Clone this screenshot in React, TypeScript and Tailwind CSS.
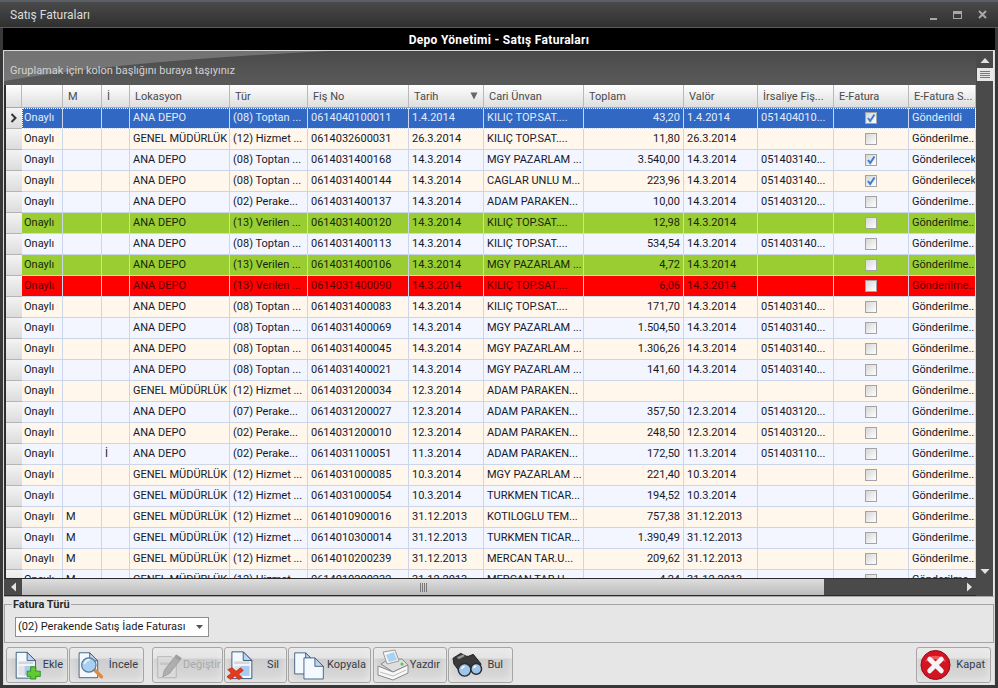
import type { ReactNode } from "react"

type Tone = "selected" | "cream" | "blue" | "green" | "red"

interface Invoice {
  m?: string
  i?: string
  loc: string
  type: string
  no: string
  date: string
  cari: string
  total: string
  valor: string
  irs: string
  efatura?: boolean
  status: string
  tone: Tone
}

const COLS = "grid grid-cols-[16px_41px_39px_28px_100px_78px_101px_75px_100px_100px_74px_76px_75px_67px]"

const TONE_CLASSES: Record<Tone, string> = {
  selected: "bg-[#3068c4] text-[#e6ecf8] outline-1 outline-dotted outline-white -outline-offset-1",
  cream: "bg-[#fff6ec] text-[#15192a]",
  blue: "bg-[#f3f5ff] text-[#15192a]",
  green: "bg-[#9acd32] text-[#15280a]",
  red: "bg-[#ff0000] text-[#5a0000]",
}

const ANA = "ANA DEPO"
const GEN = "GENEL MÜDÜRLÜK"
const TOP = "(08) Toptan ..."
const HIZ = "(12) Hizmet ..."
const PER = "(02) Perake..."
const VER = "(13) Verilen ..."
const KIL = "KILIÇ TOP.SAT...."
const MGY = "MGY PAZARLAM ..."
const ADM = "ADAM PARAKEN..."
const TRK = "TURKMEN TICAR..."
const MER = "MERCAN TAR.U..."
const GME = "Gönderilme..."

const rows: Invoice[] = [
  { loc: ANA, type: TOP, no: "0614040100011", date: "1.4.2014", cari: KIL, total: "43,20", valor: "1.4.2014", irs: "051404010...", efatura: true, status: "Gönderildi", tone: "selected" },
  { loc: GEN, type: HIZ, no: "0614032600031", date: "26.3.2014", cari: KIL, total: "11,80", valor: "26.3.2014", irs: "", status: GME, tone: "cream" },
  { loc: ANA, type: TOP, no: "0614031400168", date: "14.3.2014", cari: MGY, total: "3.540,00", valor: "14.3.2014", irs: "051403140...", efatura: true, status: "Gönderilecek", tone: "blue" },
  { loc: ANA, type: TOP, no: "0614031400144", date: "14.3.2014", cari: "CAGLAR UNLU M...", total: "223,96", valor: "14.3.2014", irs: "051403140...", efatura: true, status: "Gönderilecek", tone: "cream" },
  { loc: ANA, type: PER, no: "0614031400137", date: "14.3.2014", cari: ADM, total: "10,00", valor: "14.3.2014", irs: "051403120...", status: GME, tone: "blue" },
  { loc: ANA, type: VER, no: "0614031400120", date: "14.3.2014", cari: KIL, total: "12,98", valor: "14.3.2014", irs: "", status: GME, tone: "green" },
  { loc: ANA, type: TOP, no: "0614031400113", date: "14.3.2014", cari: KIL, total: "534,54", valor: "14.3.2014", irs: "051403140...", status: GME, tone: "blue" },
  { loc: ANA, type: VER, no: "0614031400106", date: "14.3.2014", cari: MGY, total: "4,72", valor: "14.3.2014", irs: "", status: GME, tone: "green" },
  { loc: ANA, type: VER, no: "0614031400090", date: "14.3.2014", cari: KIL, total: "6,06", valor: "14.3.2014", irs: "", status: GME, tone: "red" },
  { loc: ANA, type: TOP, no: "0614031400083", date: "14.3.2014", cari: KIL, total: "171,70", valor: "14.3.2014", irs: "051403140...", status: GME, tone: "cream" },
  { loc: ANA, type: TOP, no: "0614031400069", date: "14.3.2014", cari: MGY, total: "1.504,50", valor: "14.3.2014", irs: "051403140...", status: GME, tone: "blue" },
  { loc: ANA, type: TOP, no: "0614031400045", date: "14.3.2014", cari: MGY, total: "1.306,26", valor: "14.3.2014", irs: "051403140...", status: GME, tone: "cream" },
  { loc: ANA, type: TOP, no: "0614031400021", date: "14.3.2014", cari: MGY, total: "141,60", valor: "14.3.2014", irs: "051403140...", status: GME, tone: "blue" },
  { loc: GEN, type: HIZ, no: "0614031200034", date: "12.3.2014", cari: ADM, total: "", valor: "", irs: "", status: GME, tone: "cream" },
  { loc: ANA, type: "(07) Perake...", no: "0614031200027", date: "12.3.2014", cari: ADM, total: "357,50", valor: "12.3.2014", irs: "051403120...", status: GME, tone: "blue" },
  { loc: ANA, type: PER, no: "0614031200010", date: "12.3.2014", cari: ADM, total: "248,50", valor: "12.3.2014", irs: "051403120...", status: GME, tone: "cream" },
  { i: "İ", loc: ANA, type: PER, no: "0614031100051", date: "11.3.2014", cari: ADM, total: "172,50", valor: "11.3.2014", irs: "051403110...", status: GME, tone: "blue" },
  { loc: GEN, type: HIZ, no: "0614031000085", date: "10.3.2014", cari: MGY, total: "221,40", valor: "10.3.2014", irs: "", status: GME, tone: "cream" },
  { loc: GEN, type: HIZ, no: "0614031000054", date: "10.3.2014", cari: TRK, total: "194,52", valor: "10.3.2014", irs: "", status: GME, tone: "blue" },
  { m: "M", loc: GEN, type: HIZ, no: "0614010900016", date: "31.12.2013", cari: "KOTILOGLU TEM...", total: "757,38", valor: "31.12.2013", irs: "", status: GME, tone: "cream" },
  { m: "M", loc: GEN, type: HIZ, no: "0614010300014", date: "31.12.2013", cari: TRK, total: "1.390,49", valor: "31.12.2013", irs: "", status: GME, tone: "blue" },
  { m: "M", loc: GEN, type: HIZ, no: "0614010200239", date: "31.12.2013", cari: MER, total: "209,62", valor: "31.12.2013", irs: "", status: GME, tone: "cream" },
  { m: "M", loc: GEN, type: HIZ, no: "0614010200232", date: "31.12.2013", cari: MER, total: "4,24", valor: "31.12.2013", irs: "", status: GME, tone: "blue" },
]

const HEADERS = ["", "", "M", "İ", "Lokasyon", "Tür", "Fiş No", "Tarih", "Cari Ünvan", "Toplam", "Valör", "İrsaliye Fiş...", "E-Fatura", "E-Fatura S..."]

function Cell({ children, right, center, first }: { children?: ReactNode; right?: boolean; center?: boolean; first?: boolean }) {
  return (
    <div
      className={`flex items-center overflow-hidden whitespace-nowrap border-r border-b border-[#ccd6ea] pr-[3px] ${first ? "pl-[2px]" : "pl-[3px]"} ${
        right ? "justify-end" : center ? "justify-center" : "pt-[1px]"
      }`}
    >
      {children}
    </div>
  )
}

function CheckBox({ checked }: { checked?: boolean }) {
  return (
    <span className="relative block h-[12px] w-[12px] border border-[#a3a3a3] bg-gradient-to-br from-[#d6d6d6] to-white">
      {checked && (
        <svg viewBox="0 0 10 10" className="absolute left-0 top-0 h-[10px] w-[10px]">
          <path d="M2 5 L4.2 8 L8.5 1.5" fill="none" stroke="#3a7fd0" strokeWidth="2" />
        </svg>
      )}
    </span>
  )
}

function Row({ row }: { row: Invoice }) {
  return (
    <div className={`${COLS} h-[21px] shrink-0`}>
      <div className="flex items-center justify-center border-b border-[#b4b4b4] bg-gradient-to-b from-[#f4f4f4] to-[#dcdcdc]">
        {row.tone === "selected" && (
          <svg viewBox="0 0 8 10" className="h-[10px] w-[8px]">
            <path d="M1.5 1 L5.5 5 L1.5 9" fill="none" stroke="#333" strokeWidth="2" />
          </svg>
        )}
      </div>
      <div className={`${COLS} col-span-13 grid-cols-subgrid ${TONE_CLASSES[row.tone]}`}>
        <Cell first>Onaylı</Cell>
        <Cell>{row.m}</Cell>
        <Cell>{row.i}</Cell>
        <Cell>{row.loc}</Cell>
        <Cell>{row.type}</Cell>
        <Cell>{row.no}</Cell>
        <Cell>{row.date}</Cell>
        <Cell>{row.cari}</Cell>
        <Cell right>{row.total}</Cell>
        <Cell>{row.valor}</Cell>
        <Cell>{row.irs}</Cell>
        <Cell center>
          <CheckBox checked={row.efatura} />
        </Cell>
        <Cell>{row.status}</Cell>
      </div>
    </div>
  )
}

function HeaderRow() {
  return (
    <div className={`${COLS} h-[23px] shrink-0 border-b border-[#a8a8a8] bg-gradient-to-b from-white to-[#dedede] text-[#4a4a4a]`}>
      {HEADERS.map((h, idx) => (
        <div key={idx} className="relative flex items-center overflow-hidden whitespace-nowrap border-r border-[#b9b9b9] pl-[5px] pt-[2px]">
          {h}
          {h === "Tarih" && (
            <svg viewBox="0 0 8 8" className="absolute right-[5px] top-[7px] h-[8px] w-[8px]">
              <path d="M0.5 0.5 H7.5 L4 7.5 Z" fill="#666" />
            </svg>
          )}
        </div>
      ))}
    </div>
  )
}

function Arrow({ dir }: { dir: "up" | "down" | "left" | "right" }) {
  const d = {
    up: "M0.5 7 H9.5 L5 2 Z",
    down: "M0.5 3 H9.5 L5 8 Z",
    left: "M7 0.5 V9.5 L2 5 Z",
    right: "M3 0.5 V9.5 L8 5 Z",
  }[dir]
  return (
    <svg viewBox="0 0 10 10" className="h-[10px] w-[10px]">
      <path d={d} fill="#e2e2e2" />
    </svg>
  )
}

function Doc() {
  return (
    <g>
      <path d="M2.5 1.5 H15 L24.5 11 V31 H2.5 Z" fill="#f4f8ff" stroke="#2f5278" />
      <path d="M15 1.5 V11 H24.5 Z" fill="#bcd6f2" stroke="#2f5278" />
    </g>
  )
}

function DocBody() {
  return (
    <>
      <Doc />
      <rect x="5" y="12" width="17" height="3" fill="#d6d6d6" />
      <rect x="5" y="17" width="7" height="11" fill="#e4e4e4" />
      <rect x="12" y="17" width="10" height="11" fill="#a9cbf0" />
    </>
  )
}

function EkleIcon() {
  return (
    <svg viewBox="0 0 32 32" className="h-[32px] w-[28px]">
      <DocBody />
      <path d="M19 18 H25 V23 H30 V29 H25 V32 H19 V29 H15 V23 H19 Z" fill="#62c933" stroke="#1f8a1f" />
    </svg>
  )
}

function InceleIcon() {
  return (
    <svg viewBox="0 0 32 32" className="h-[32px] w-[27px]">
      <Doc />
      <path d="M20 21 L29 30" stroke="#e8883a" strokeWidth="4" strokeLinecap="round" />
      <circle cx="14" cy="16" r="8.5" fill="#a8d0f4" stroke="#5d7890" strokeWidth="1.5" />
      <path d="M9 15 A5.5 5.5 0 0 1 15 10" fill="none" stroke="#eaf5ff" strokeWidth="2" />
    </svg>
  )
}

function DegistirIcon() {
  return (
    <svg viewBox="0 0 32 32" className="h-[32px] w-[27px]">
      <path d="M2 6 H18 L24 12 V31 H2 Z" fill="#dcdcdc" stroke="#a8a8a8" />
      <rect x="5" y="13" width="14" height="3" fill="#c4c4c4" />
      <path d="M8 30 L10 22 L24 4 L30 8 L16 26 Z" fill="#a6a6a6" stroke="#8c8c8c" />
      <path d="M24 4 L30 8 L28 11 L22 7 Z" fill="#8e8e8e" />
    </svg>
  )
}

function SilIcon() {
  return (
    <svg viewBox="0 0 32 32" className="h-[32px] w-[29px]">
      <g transform="translate(4 0)">
        <DocBody />
      </g>
      <path d="M2 21 L7 19 L11 23 L16 19 L19 22 L14 26 L18 30 L14 32 L10 28 L5 32 L1 29 L6 25 Z" fill="#e53a1e" stroke="#b52a12" strokeWidth="0.8" />
    </svg>
  )
}

function KopyalaIcon() {
  return (
    <svg viewBox="0 0 38 34" className="h-[33px] w-[32px]">
      <path d="M2 2 H15 L24 11 V27 H2 Z" fill="#f4f8ff" stroke="#2f5278" />
      <path d="M15 2 V11 H24 Z" fill="#bcd6f2" stroke="#2f5278" />
      <path d="M13 8 H26 L36 18 V33 H13 Z" fill="#f4f8ff" stroke="#2f5278" />
      <path d="M26 8 V18 H36 Z" fill="#bcd6f2" stroke="#2f5278" />
    </svg>
  )
}

function YazdirIcon() {
  return (
    <svg viewBox="0 0 32 32" className="h-[32px] w-[32px]">
      <path d="M4 15 L12 10 L25 10 L31 16 L16 23 Z" fill="#dedede" stroke="#8a8a8a" />
      <path d="M6 3 L18 1 L22 12 L10 15 Z" fill="#f4f4f4" stroke="#9a9a9a" />
      <path d="M9 6 L17 3 L20 11 L12 13 Z" fill="#a8d4f0" />
      <path d="M1 17 L16 23 L31 16 V24 L16 31 L1 26 Z" fill="#f7f7f7" stroke="#8a8a8a" />
      <path d="M3 23 L16 27 L29 21" fill="none" stroke="#bdbdbd" />
      <circle cx="25" cy="15" r="1.5" fill="#4fc84f" />
    </svg>
  )
}

function BulIcon() {
  return (
    <svg viewBox="0 0 32 26" className="h-[26px] w-[31px]">
      <path d="M1 6 L9 1 L15 4 L17 4 L22 2 L30 12 L27 18 L18 14 L13 14 L8 20 L2 12 Z" fill="#3a3a3a" stroke="#222" />
      <path d="M5 5 L12 2 L13 4 L7 7 Z" fill="#999" />
      <circle cx="13" cy="18" r="6.5" fill="#9dc6ee" stroke="#2b2b2b" strokeWidth="1.5" />
      <circle cx="25" cy="17" r="5.5" fill="#9dc6ee" stroke="#2b2b2b" strokeWidth="1.5" />
      <path d="M10 17 A3.5 3.5 0 0 1 13 14.5" fill="none" stroke="#fff" strokeWidth="1.5" />
      <path d="M22.5 16 A3 3 0 0 1 25 14" fill="none" stroke="#fff" strokeWidth="1.5" />
    </svg>
  )
}

function KapatIcon() {
  return (
    <svg viewBox="0 0 32 32" className="h-[32px] w-[31px]">
      <circle cx="16" cy="16" r="15" fill="#d31422" stroke="#8e0d14" />
      <path d="M5 13 A12 11 0 0 1 27 13 Q16 7 5 13 Z" fill="#ee5a5f" />
      <path d="M10 10 L22 22 M22 10 L10 22" stroke="#f4f4f4" strokeWidth="5" strokeLinecap="round" />
    </svg>
  )
}

function Btn({ label, icon, className, disabled }: { label: string; icon: ReactNode; className: string; disabled?: boolean }) {
  return (
    <button
      type="button"
      className={`flex h-[36px] items-center justify-between rounded-[3px] border border-[#a6a6a6] bg-[linear-gradient(180deg,#e8e8e8_0%,#e4e4e4_30%,#cdcdcd_32%,#dadada_100%)] shadow-[inset_0_0_8px_#ececec] ${
        disabled ? "text-[#a9a9a9]" : "text-[#333b48]"
      } ${className}`}
    >
      <span className={disabled ? "opacity-80" : ""}>{icon}</span>
      <span>{label}</span>
    </button>
  )
}

export default function App() {
  return (
    <div className="flex h-[688px] w-[998px] flex-col overflow-hidden bg-[#383838] font-['Roboto',Arial,sans-serif] text-[11px]">
      <div className="flex h-[28px] shrink-0 items-center justify-between border-t-2 border-b border-t-[#5a5f66] border-b-[#5c5c5c] bg-gradient-to-b from-[#4a4a4a] to-[#303030] pl-[10px] pr-[11px]">
        <span className="text-[12px] text-[#dcdcdc]">Satış Faturaları</span>
        <div className="flex items-center gap-[16px]">
          <span className="mt-[9px] block h-[2px] w-[7px] bg-[#a8a8a8]" />
          <span className="block h-[8px] w-[9px] border border-t-[3px] border-[#a8a8a8]" />
          <svg viewBox="0 0 9 9" className="h-[9px] w-[9px]">
            <path d="M1 1 L8 8 M8 1 L1 8" stroke="#a8a8a8" strokeWidth="2" />
          </svg>
        </div>
      </div>

      <div className="flex min-h-0 flex-1 flex-col px-[3px] pb-[3px]">
        <div className="flex h-[22px] shrink-0 items-center justify-center bg-black pt-[2px] text-[12px] font-bold tracking-[0.3px] text-white">
          Depo Yönetimi - Satış Faturaları
        </div>

        <div className="flex min-h-0 flex-1 flex-col border-x border-t border-[#d8d8d8] bg-[#e6e6e6]">
          <div className="flex h-[545px] shrink-0 pr-[1px]">
            <div className="flex w-[972px] flex-col bg-[#2e2e2e]">
              <div className="relative h-[34px] shrink-0 bg-gradient-to-b from-[#4a4a4a] to-[#5a5a5a]">
                <svg viewBox="0 0 972 34" className="absolute left-0 top-0 h-[34px] w-[972px]">
                  <path d="M0 0 H325 Q120 10 0 30 Z" fill="#848484" opacity="0.7" />
                </svg>
                <span className="absolute left-[6px] top-[12px] text-[#d2d2d2]">Gruplamak için kolon başlığını buraya taşıyınız</span>
              </div>
              <div className="flex h-[493px] shrink-0 flex-col overflow-hidden pl-[2px]">
                <HeaderRow />
                {rows.map((row) => (
                  <Row key={row.no} row={row} />
                ))}
              </div>
              <div className="flex h-[18px] shrink-0 items-stretch border-t border-b border-[#2a2a2a] bg-[#4a4a4a] pl-[2px]">
                <div className="flex w-[16px] items-center justify-center">
                  <Arrow dir="left" />
                </div>
                <div className="flex w-[802px] items-center justify-center gap-[1px] bg-gradient-to-b from-[#dedede] to-[#bcbcbc]">
                  <span className="block h-[9px] w-[1px] bg-[#777]" />
                  <span className="block h-[9px] w-[1px] bg-[#777]" />
                  <span className="block h-[9px] w-[1px] bg-[#777]" />
                  <span className="block h-[9px] w-[1px] bg-[#777]" />
                </div>
                <div className="flex flex-1 items-center justify-end pr-[2px]">
                  <Arrow dir="right" />
                </div>
              </div>
            </div>
            <div className="flex flex-1 flex-col items-center bg-[#4a4a4a] pt-[2px]">
              <div className="flex h-[15px] items-center justify-center">
                <Arrow dir="up" />
              </div>
              <div className="flex h-[13px] w-[16px] flex-col justify-center gap-[1px] bg-[#e8e8e8] px-[3px]">
                <span className="block h-[1px] bg-[#777]" />
                <span className="block h-[1px] bg-[#777]" />
                <span className="block h-[1px] bg-[#777]" />
                <span className="block h-[1px] bg-[#777]" />
              </div>
              <div className="flex-1" />
              <div className="mb-[18px] flex h-[15px] items-center justify-center">
                <Arrow dir="down" />
              </div>
            </div>
          </div>

          <div className="h-[1px] shrink-0 bg-[#a8a8a8]" />

          <fieldset className="mt-[1px] h-[45px] shrink-0 border border-[#a4a4a4] pl-[10px]">
            <legend className="ml-[-3px] px-[1px] text-[11px] font-bold leading-[13px] text-[#2a2a2a]">Fatura Türü</legend>
            <div className="mt-[6px] flex h-[20px] w-[194px] items-center justify-between border border-[#8e8e8e] bg-white pl-[2px] pr-[5px] text-[#1a1a1a]">
              <span>(02) Perakende Satış İade Faturası</span>
              <svg viewBox="0 0 7 4" className="h-[4px] w-[7px]">
                <path d="M0 0 H7 L3.5 4 Z" fill="#555" />
              </svg>
            </div>
          </fieldset>

          <div className="mt-[4px] flex shrink-0 pl-[2px] pr-[3px]">
            <Btn label="Ekle" icon={<EkleIcon />} className="w-[62px] pl-[7px] pr-[4px]" />
            <Btn label="İncele" icon={<InceleIcon />} className="ml-[1px] w-[75px] pl-[7px] pr-[5px]" />
            <Btn label="Değiştir" icon={<DegistirIcon />} className="ml-[8px] w-[71px] pl-[3px] pr-[4px]" disabled />
            <Btn label="Sil" icon={<SilIcon />} className="ml-[1px] w-[63px] pl-[1px] pr-[7px]" />
            <Btn label="Kopyala" icon={<KopyalaIcon />} className="ml-[1px] w-[83px] pl-[4px] pr-[4px]" />
            <Btn label="Yazdır" icon={<YazdirIcon />} className="ml-[2px] w-[74px] pl-[3px] pr-[6px]" />
            <Btn label="Bul" icon={<BulIcon />} className="ml-[1px] w-[65px] pl-[3px] pr-[9px]" />
            <Btn label="Kapat" icon={<KapatIcon />} className="ml-auto w-[75px] pl-[3px] pr-[5px]" />
          </div>
        </div>
      </div>
    </div>
  )
}
